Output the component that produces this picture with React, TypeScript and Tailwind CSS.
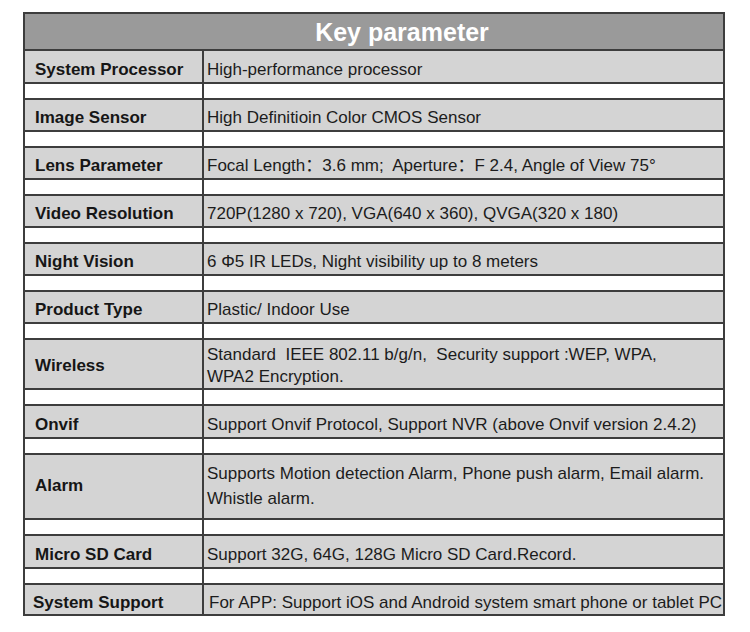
import React from "react";

type Row = {
  label: string;
  value: React.ReactNode;
  h: string;
  lh?: string;
  pad?: string;
  lpad?: string;
  rpad?: string;
};

const rows: Row[] = [
  { label: "System Processor", value: "High-performance processor", h: "h-[33px]" },
  { label: "Image Sensor", value: "High Definitioin Color CMOS Sensor", h: "h-[32px]" },
  { label: "Lens Parameter", value: "Focal Length：3.6 mm;  Aperture：F 2.4, Angle of View 75°", h: "h-[32px]" },
  { label: "Video Resolution", value: "720P(1280 x 720), VGA(640 x 360), QVGA(320 x 180)", h: "h-[32px]" },
  { label: "Night Vision", value: "6 Φ5 IR LEDs, Night visibility up to 8 meters", h: "h-[32px]" },
  { label: "Product Type", value: "Plastic/ Indoor Use", h: "h-[32px]" },
  {
    label: "Wireless",
    value: (
      <>
        {"Standard  IEEE 802.11 b/g/n,  Security support :WEP, WPA,"}
        <br />
        {"WPA2 Encryption."}
      </>
    ),
    h: "h-[50px]",
    lh: "leading-[22px]",
    pad: "pt-[4px]",
  },
  { label: "Onvif", value: "Support Onvif Protocol, Support NVR (above Onvif version 2.4.2)", h: "h-[33px]" },
  {
    label: "Alarm",
    value: (
      <>
        {"Supports Motion detection Alarm, Phone push alarm, Email alarm."}
        <br />
        {"Whistle alarm."}
      </>
    ),
    h: "h-[65px]",
    lh: "leading-[25px]",
    pad: "pb-[2px]",
  },
  { label: "Micro SD Card", value: "Support 32G, 64G, 128G Micro SD Card.Record.", h: "h-[33px]" },
  {
    label: "System Support",
    value: "For APP: Support iOS and Android system smart phone or tablet PC",
    h: "h-[31px]",
    lpad: "pl-[8px]",
    rpad: "pl-[5px]",
  },
];

export default function App() {
  return (
    <div
      className="w-[750px] h-[632px] bg-white pt-[12px] pl-[23px]"
      style={{ fontFamily: '"Liberation Sans", Arial, "Noto Sans CJK SC", sans-serif' }}
    >
      <div className="w-[702px] border-2 border-[#3d3d3d] flex flex-col">
        <div className="h-[35px] bg-[#9a9a9a] flex items-center justify-center pl-[56px] pt-[1px]">
          <span className="text-white font-bold text-[25px] leading-[28px]">Key parameter</span>
        </div>
        {rows.map((r, i) => (
          <React.Fragment key={i}>
            <div className={`flex border-t-2 border-[#3d3d3d] bg-[#d4d4d4] ${r.h}`}>
              <div
                className={`w-[177px] shrink-0 flex items-center ${r.lpad ?? "pl-[10px]"} ${r.pad ?? "pt-[6px]"} text-[17px] leading-[20px] font-bold text-[#161616]`}
              >
                {r.label}
              </div>
              <div
                className={`flex-1 border-l-2 border-[#3d3d3d] flex items-center ${r.rpad ?? "pl-[3px]"} ${r.pad ?? "pt-[6px]"} text-[17px] ${r.lh ?? "leading-[20px]"} text-[#1c1c1c] whitespace-pre`}
              >
                <div>{r.value}</div>
              </div>
            </div>
            {i < rows.length - 1 && (
              <div className="flex border-t-2 border-[#3d3d3d] bg-white h-[16px]">
                <div className="w-[177px] shrink-0" />
                <div className="flex-1 border-l-2 border-[#3d3d3d]" />
              </div>
            )}
          </React.Fragment>
        ))}
      </div>
    </div>
  );
}
